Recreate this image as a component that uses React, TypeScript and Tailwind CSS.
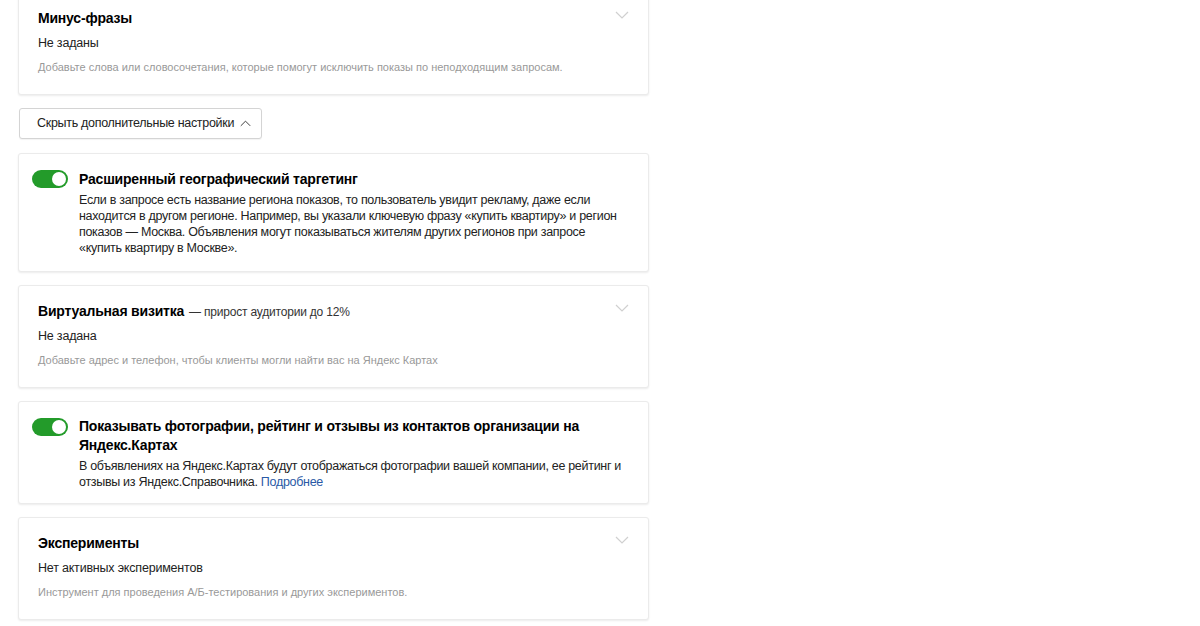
import React from "react";

const font = { fontFamily: '"Liberation Sans", Arial, sans-serif' };

function Chevron({ up = false, className = "" }: { up?: boolean; className?: string }) {
  return (
    <svg width="14" height="8" viewBox="0 0 14 8" className={className} fill="none">
      {up ? (
        <path d="M1 7 L7 1 L13 7" stroke="currentColor" strokeWidth="1.2" />
      ) : (
        <path d="M1 1 L7 7 L13 1" stroke="currentColor" strokeWidth="1.2" />
      )}
    </svg>
  );
}

function Toggle() {
  return (
    <div className="w-[36px] h-[18px] rounded-full bg-[#239b2a] relative shrink-0">
      <div className="absolute right-[2px] top-[2px] w-[14px] h-[14px] rounded-full bg-white" />
    </div>
  );
}

function Card({ children, className = "" }: { children: React.ReactNode; className?: string }) {
  return (
    <div className={"bg-white border border-[#ebebeb] rounded-[3px] shadow-[0_1px_2px_rgba(0,0,0,0.08)] " + className}>
      {children}
    </div>
  );
}

function CollapseCard({ title, extra, value, hint, className = "" }: { title: string; extra?: string; value: string; hint: string; className?: string }) {
  return (
    <Card className={"relative pl-[19px] pr-[20px] pt-[15px] pb-[19px] " + className}>
      <Chevron className="absolute right-[19px] top-[18px] text-[#d0d0d0]" />
      <div className="h-[20px] leading-[20px] flex items-baseline">
        <span className="text-[14px] font-bold text-black tracking-[-0.2px]">{title}</span>
        {extra && <span className="text-[12px] text-[#333] ml-[5px] tracking-[-0.2px]">{extra}</span>}
      </div>
      <div className="mt-[6px] text-[12.5px] leading-[18px] text-[#222] tracking-[-0.2px]">{value}</div>
      <div className="mt-[7px] text-[11px] leading-[16px] text-[#999]">{hint}</div>
    </Card>
  );
}

export default function App() {
  return (
    <div className="h-[626px] bg-white overflow-hidden" style={font}>
      <div className="w-[631px] ml-[18px] flex flex-col gap-[13px]">
        <CollapseCard
          className="mt-[-8px]"
          title="Минус-фразы"
          value="Не заданы"
          hint="Добавьте слова или словосочетания, которые помогут исключить показы по неподходящим запросам."
        />
        <div className="flex">
          <button className="h-[31px] w-[243px] ml-[1px] border border-[#d4d4d4] rounded-[3px] bg-white flex items-center pl-[17px] gap-[6px] text-[12.5px] text-[#222] tracking-[-0.3px] shadow-[0_1px_1px_rgba(0,0,0,0.05)]">
            Скрыть дополнительные настройки
            <Chevron up className="text-[#333] w-[11px] h-[7px]" />
          </button>
        </div>
        <Card className="flex pl-[13px] pr-[10px] pt-[16px] pb-[15px] mt-[1px]">
          <div className="pt-[0px]"><Toggle /></div>
          <div className="ml-[11px]">
            <div className="text-[14px] font-bold leading-[18px] text-black tracking-[-0.2px]">Расширенный географический таргетинг</div>
            <div className="mt-[4px] text-[12.5px] leading-[16px] text-[#222] tracking-[-0.3px] w-[548px]">
              Если в запросе есть название региона показов, то пользователь увидит рекламу, даже если находится в другом регионе. Например, вы указали ключевую фразу «купить квартиру» и регион показов — Москва. Объявления могут показываться жителям других регионов при запросе «купить квартиру в Москве».
            </div>
          </div>
        </Card>
        <CollapseCard
          title="Виртуальная визитка"
          extra="— прирост аудитории до 12%"
          value="Не задана"
          hint="Добавьте адрес и телефон, чтобы клиенты могли найти вас на Яндекс Картах"
        />
        <Card className="flex pl-[13px] pr-[10px] pt-[15px] pb-[13px]">
          <div className="pt-[1px]"><Toggle /></div>
          <div className="ml-[11px]">
            <div className="text-[14px] font-bold leading-[19px] text-black tracking-[-0.2px] w-[520px]">
              Показывать фотографии, рейтинг и отзывы из контактов организации на Яндекс.Картах
            </div>
            <div className="mt-[3px] text-[12.5px] leading-[16px] text-[#222] tracking-[-0.3px] w-[552px]">
              В объявлениях на Яндекс.Картах будут отображаться фотографии вашей компании, ее рейтинг и отзывы из Яндекс.Справочника. <span className="text-[#2a5aa6]">Подробнее</span>
            </div>
          </div>
        </Card>
        <CollapseCard
          title="Эксперименты"
          value="Нет активных экспериментов"
          hint="Инструмент для проведения А/Б-тестирования и других экспериментов."
        />
      </div>
    </div>
  );
}
